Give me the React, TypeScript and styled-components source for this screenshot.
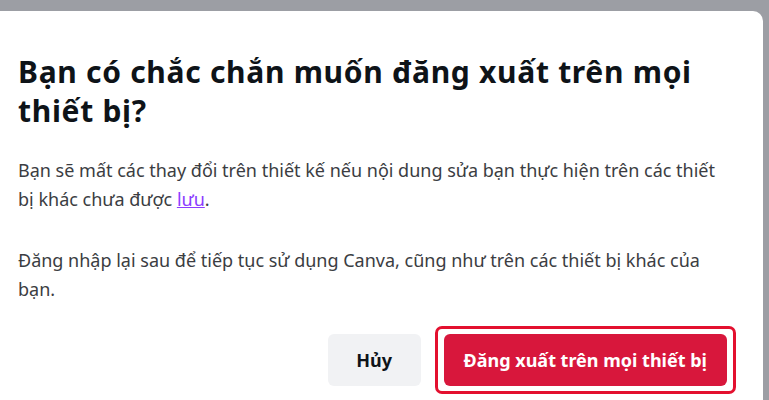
import React from 'react'
import styled, { createGlobalStyle } from 'styled-components'

const GlobalStyle = createGlobalStyle`
    html, body {
        margin: 0;
        padding: 0;
        background: #9c9ea4;
        font-family: "Noto Sans", "Open Sans", "Liberation Sans", sans-serif;
    }
`

const Backdrop = styled.div`
    height: 400px;
    padding: 11px 6px 0 0;
    box-sizing: border-box;
    overflow: hidden;
`

const Dialog = styled.div`
    height: 100%;
    background: #fff;
    border-radius: 0 10px 0 0;
    padding: 41px 27px 0 18px;
    box-sizing: border-box;
`

const Title = styled.h1`
    margin: 0 0 26px 0;
    font-size: 30px;
    font-weight: 700;
    line-height: 39px;
    letter-spacing: 0.7px;
    color: #0e1318;
`

const Text = styled.p`
    margin: 0 12px 32px 0;
    font-size: 18px;
    line-height: 29px;
    color: #3b3d42;

    &:last-of-type {
        margin-bottom: 22px;
    }
`

const Link = styled.a`
    color: #8b3dff;
    text-decoration: underline;
    cursor: pointer;
`

const Actions = styled.div`
    display: flex;
    justify-content: flex-end;
    align-items: center;
    gap: 14px;
`

const Highlight = styled.div`
    display: flex;
    border: 3px solid #e3102f;
    border-radius: 7px;
    padding: 5px 6px;
`

const Button = styled.button<{ $primary?: boolean }>`
    height: 52px;
    min-width: 93px;
    padding: 0 ${p => (p.$primary ? 20 : 24)}px;
    border: none;
    border-radius: 6px;
    font-family: inherit;
    font-size: 18px;
    font-weight: 700;
    cursor: pointer;
    background: ${p => (p.$primary ? '#d8173c' : '#f1f2f4')};
    color: ${p => (p.$primary ? '#fff' : '#0e1318')};
`

export default function App() {
    return (
        <>
            <GlobalStyle />
            <Backdrop>
                <Dialog>
                    <Title>Bạn có chắc chắn muốn đăng xuất trên mọi thiết bị?</Title>
                    <Text>
                        Bạn sẽ mất các thay đổi trên thiết kế nếu nội dung sửa bạn thực hiện trên các thiết bị khác chưa được <Link>lưu</Link>.
                    </Text>
                    <Text>
                        Đăng nhập lại sau để tiếp tục sử dụng Canva, cũng như trên các thiết bị khác của bạn.
                    </Text>
                    <Actions>
                        <Button>Hủy</Button>
                        <Highlight>
                            <Button $primary>Đăng xuất trên mọi thiết bị</Button>
                        </Highlight>
                    </Actions>
                </Dialog>
            </Backdrop>
        </>
    )
}
